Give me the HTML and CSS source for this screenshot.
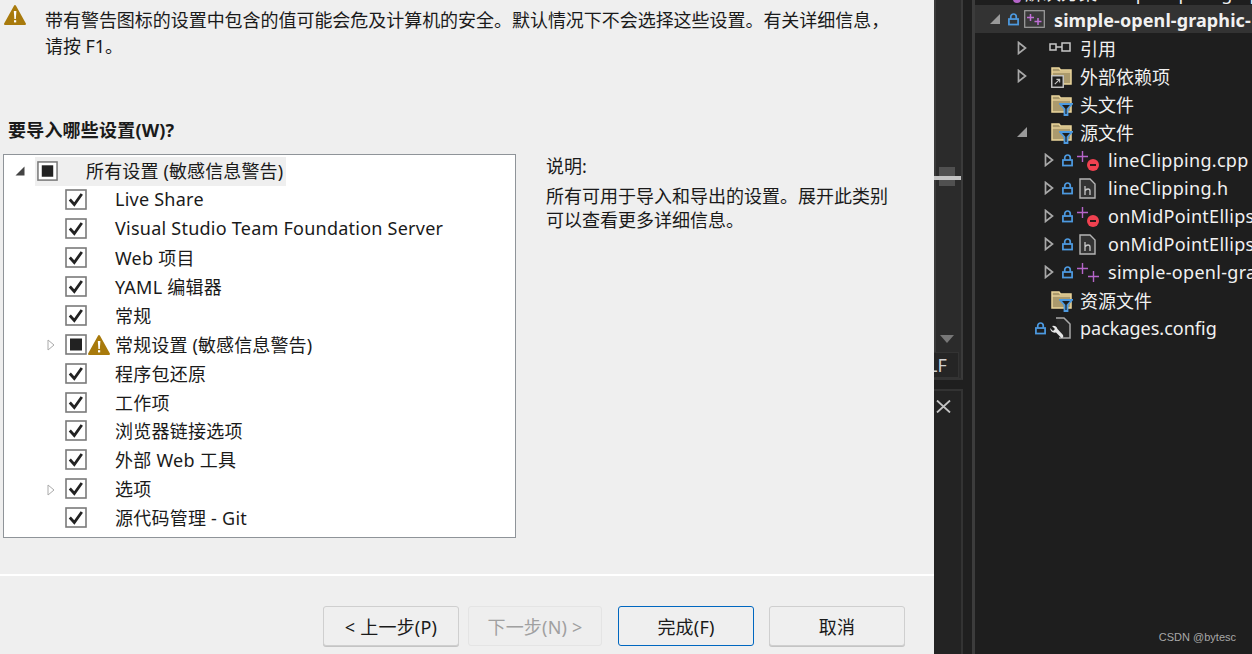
FILE: index.html
```html
<!DOCTYPE html>
<html lang="zh">
<head>
<meta charset="utf-8">
<title>导入设置</title>
<link rel="stylesheet" href="styles.css">
</head>
<body>
<svg class="defs" width="0" height="0">
  <defs>
    <symbol id="warn" viewBox="0 0 22 22"><path d="M11 2 L21 20 H1 Z" fill="#a87a0c" stroke="#a87a0c" stroke-width="2" stroke-linejoin="round"/><path d="M9.800 7 H12.400 L11.800 15 H10.400 Z" fill="#fff"/><rect x="10" y="16.200" width="2.200" height="2.200" fill="#fff"/></symbol>
    <symbol id="check" viewBox="0 0 22 22"><rect x="1" y="1" width="20" height="19" fill="#fff" stroke="#7a7a7a" stroke-width="1.600"/><path d="M4.800 10.500 L9.300 15.500 L16.800 5" fill="none" stroke="#222" stroke-width="2.800"/></symbol>
    <symbol id="mixed" viewBox="0 0 22 22"><rect x="1" y="1" width="20" height="19" fill="#fff" stroke="#7a7a7a" stroke-width="1.600"/><rect x="5" y="4.500" width="12" height="12" fill="#222"/></symbol>
    <symbol id="lock" viewBox="0 0 12 13"><path d="M3 6 V3.500 a3 3 0 0 1 6 0 V6" fill="none" stroke="#4d9ae0" stroke-width="1.900"/><rect x="1" y="6" width="10" height="6" fill="none" stroke="#4d9ae0" stroke-width="1.900"/></symbol>
    <symbol id="arrow" viewBox="0 0 10 14"><path d="M1.500 1.500 L8.500 7 L1.500 12.500 Z" fill="none" stroke="#a8a8a8" stroke-width="1.700"/></symbol>
    <symbol id="folder" viewBox="0 0 21 18"><path d="M1 1 H8 L9.500 3 H20 V17 H1 Z" fill="#ab9a6d" stroke="#ecd69c" stroke-width="1.500"/><path d="M1 5 H20" stroke="#ecd69c" stroke-width="1.300"/></symbol>
    <symbol id="filter" viewBox="0 0 14 13"><path d="M1 1 H13 L8.500 6 V12 H5.500 V6 Z" fill="#1e1e1e" stroke="#4d9ae0" stroke-width="1.800"/></symbol>
    <symbol id="hfile" viewBox="0 0 17 21"><path d="M1 1 H11 L16 6 V20 H1 Z" fill="#333" stroke="#b5b5b5" stroke-width="1.400"/><path d="M6 8 V17 M6 13 Q7 11 9 11 Q11 11 11 13 V17" fill="none" stroke="#c8c8c8" stroke-width="1.300"/></symbol>
    <symbol id="plus" viewBox="0 0 11 11"><path d="M5.500 0 V11 M0 5.500 H11" stroke="#b565c9" stroke-width="1.400"/></symbol>
  </defs>
</svg>
<div class="screen">
  <main class="dialog">
    <section class="notice">
      <svg class="notice-icon"><use href="#warn"/></svg>
      <p>带有警告图标的设置中包含的值可能会危及计算机的安全。默认情况下不会选择这些设置。有关详细信息，<br>请按 F1。</p>
    </section>
    <h1 class="prompt">要导入哪些设置(W)?</h1>
    <section class="chooser">
      <div class="tree">
        <div class="row root">
          <svg class="root-arrow" viewBox="0 0 10 10"><path d="M9.500 .5 V9.500 H.5 Z" fill="#444"/></svg>
          <div class="root-sel">
            <svg class="box"><use href="#mixed"/></svg>
            <span class="root-label">所有设置 (敏感信息警告)</span>
          </div>
        </div>
        <div class="row"><svg class="box"><use href="#check"/></svg><span class="label">Live Share</span></div>
        <div class="row"><svg class="box"><use href="#check"/></svg><span class="label">Visual Studio Team Foundation Server</span></div>
        <div class="row"><svg class="box"><use href="#check"/></svg><span class="label">Web 项目</span></div>
        <div class="row"><svg class="box"><use href="#check"/></svg><span class="label">YAML 编辑器</span></div>
        <div class="row"><svg class="box"><use href="#check"/></svg><span class="label">常规</span></div>
        <div class="row">
          <svg class="expander" viewBox="0 0 8 12"><path d="M1 1 L7 6 L1 11 Z" fill="#fff" stroke="#aaa"/></svg>
          <svg class="box"><use href="#mixed"/></svg>
          <svg class="row-warn"><use href="#warn"/></svg>
          <span class="label warned">常规设置 (敏感信息警告)</span>
        </div>
        <div class="row"><svg class="box"><use href="#check"/></svg><span class="label">程序包还原</span></div>
        <div class="row"><svg class="box"><use href="#check"/></svg><span class="label">工作项</span></div>
        <div class="row"><svg class="box"><use href="#check"/></svg><span class="label">浏览器链接选项</span></div>
        <div class="row"><svg class="box"><use href="#check"/></svg><span class="label">外部 Web 工具</span></div>
        <div class="row">
          <svg class="expander" viewBox="0 0 8 12"><path d="M1 1 L7 6 L1 11 Z" fill="#fff" stroke="#aaa"/></svg>
          <svg class="box"><use href="#check"/></svg><span class="label">选项</span>
        </div>
        <div class="row"><svg class="box"><use href="#check"/></svg><span class="label">源代码管理 - Git</span></div>
      </div>
      <div class="desc">
        <p class="desc-title">说明:</p>
        <p>所有可用于导入和导出的设置。展开此类别<br>可以查看更多详细信息。</p>
      </div>
    </section>
    <footer class="footer">
      <button class="btn">&lt; 上一步(P)</button>
      <button class="btn off">下一步(N) &gt;</button>
      <button class="btn primary">完成(F)</button>
      <button class="btn">取消</button>
    </footer>
  </main>
  <div class="strip">
    <div class="scrollbar">
      <div class="thumb"></div>
      <svg class="scroll-down" viewBox="0 0 14 8"><path d="M0 0 H14 L7 8 Z" fill="#777"/></svg>
      <div class="lf">LF</div>
    </div>
    <div class="close-pane">
      <svg class="close-x" viewBox="0 0 15 13"><path d="M1 .5 L14 12.500 M14 .5 L1 12.500" stroke="#c4c4c4" stroke-width="1.800"/></svg>
    </div>
  </div>
  <aside class="explorer">
    <div class="top-cut"><span class="cut-dot"></span><span class="cut-text">解决方案 'simple-openl-graphic'</span></div>
    <div class="node project">
      <svg class="tri" viewBox="0 0 10 10"><path d="M10 0 V10 H0 Z" fill="#9a9a9a"/></svg>
      <svg class="ic-lock"><use href="#lock"/></svg>
      <svg class="proj-ic" viewBox="0 0 21 18"><rect x=".7" y=".7" width="19.600" height="16.600" fill="#3a3a3a" stroke="#a0a0a0" stroke-width="1.200"/><path d="M6.500 4 V11 M3 7.500 H10 M14 8 V15 M10.500 11.500 H17.500" stroke="#c06fd6" stroke-width="1.500"/></svg>
      <span class="txt">simple-openl-graphic-</span>
    </div>
    <div class="node l2"><svg class="arr"><use href="#arrow"/></svg>
      <svg class="ic-main" viewBox="0 0 24 20"><rect x="1" y="6" width="6" height="6" fill="none" stroke="#c8c8c8" stroke-width="1.500"/><path d="M7 9 H13" stroke="#c8c8c8" stroke-width="1.500"/><rect x="13" y="5" width="8" height="8" fill="none" stroke="#c8c8c8" stroke-width="1.500"/></svg><span class="txt">引用</span></div>
    <div class="node l2"><svg class="arr"><use href="#arrow"/></svg>
      <span class="stack"><svg class="ic-folder"><use href="#folder"/></svg><svg class="ic-short" viewBox="0 0 12 12"><rect x=".7" y=".7" width="10.600" height="10.600" fill="#1e1e1e" stroke="#c8c8c8" stroke-width="1.300"/><path d="M3.500 8.500 L8 4 M5 4 H8 V7" fill="none" stroke="#c8c8c8"/></svg></span><span class="txt">外部依赖项</span></div>
    <div class="node l2 noarr">
      <span class="stack"><svg class="ic-folder"><use href="#folder"/></svg><svg class="ic-filter"><use href="#filter"/></svg></span><span class="txt">头文件</span></div>
    <div class="node l2"><svg class="tri2" viewBox="0 0 10 10"><path d="M10 0 V10 H0 Z" fill="#9a9a9a"/></svg>
      <span class="stack"><svg class="ic-folder"><use href="#folder"/></svg><svg class="ic-filter"><use href="#filter"/></svg></span><span class="txt">源文件</span></div>
    <div class="node l3"><svg class="arr"><use href="#arrow"/></svg><svg class="ic-lock"><use href="#lock"/></svg>
      <span class="stack file"><svg class="ic-plus"><use href="#plus"/></svg><span class="minus"></span></span><span class="txt file-name">lineClipping.cpp</span></div>
    <div class="node l3"><svg class="arr"><use href="#arrow"/></svg><svg class="ic-lock"><use href="#lock"/></svg>
      <span class="stack file"><svg class="ic-h"><use href="#hfile"/></svg></span><span class="txt file-name">lineClipping.h</span></div>
    <div class="node l3"><svg class="arr"><use href="#arrow"/></svg><svg class="ic-lock"><use href="#lock"/></svg>
      <span class="stack file"><svg class="ic-plus"><use href="#plus"/></svg><span class="minus"></span></span><span class="txt file-name">onMidPointEllipse.cpp</span></div>
    <div class="node l3"><svg class="arr"><use href="#arrow"/></svg><svg class="ic-lock"><use href="#lock"/></svg>
      <span class="stack file"><svg class="ic-h"><use href="#hfile"/></svg></span><span class="txt file-name">onMidPointEllipse.h</span></div>
    <div class="node l3"><svg class="arr"><use href="#arrow"/></svg><svg class="ic-lock"><use href="#lock"/></svg>
      <span class="stack file"><svg class="ic-plus"><use href="#plus"/></svg><svg class="ic-plus second"><use href="#plus"/></svg></span><span class="txt file-name">simple-openl-graphic.cpp</span></div>
    <div class="node l2 noarr">
      <span class="stack"><svg class="ic-folder"><use href="#folder"/></svg><svg class="ic-filter"><use href="#filter"/></svg></span><span class="txt">资源文件</span></div>
    <div class="node pkg"><svg class="ic-lock"><use href="#lock"/></svg>
      <svg class="ic-main" viewBox="0 0 22 22"><path d="M7 1 H15 L21 7 V21 H10" fill="#262626" stroke="#a8a8a8" stroke-width="1.500"/><path d="M1 11 L4 14 L6 12 L3 9 Q7 8 8.500 12 L14 18 Q15 20.500 12.500 21 L7 15.500 Q2 16.500 1 11 Z" fill="#e6e6e6"/></svg><span class="txt">packages.config</span></div>
    <div class="watermark">CSDN @bytesc</div>
  </aside>
</div>
</body>
</html>
```
FILE: styles.css
```css
* { box-sizing: border-box; }
html, body { margin: 0; padding: 0; }
body { width: 1252px; height: 654px; overflow: hidden; background: #1e1e1e; font-family: "Noto Sans", "Noto Sans CJK SC", sans-serif; }
p { margin: 0; }
.defs { display: block; height: 0; }
.screen { display: flex; width: 1252px; height: 654px; overflow: hidden; }

.dialog { flex: 0 0 934px; height: 654px; background: #efefef; color: #1a1a1a; font-size: 18px; display: flex; flex-direction: column; }
.notice { display: flex; height: 64px; padding: 4px 0 0 4px; }
.notice-icon { width: 22px; height: 22px; flex: none; }
.notice p { margin-left: 19px; font-size: 18px; line-height: 26px; white-space: nowrap; margin-top: 3px; letter-spacing: -.04px; }
.prompt { margin: 54px 0 0 8px; font-size: 18px; line-height: 24px; font-weight: 700; color: #1a1a1a; letter-spacing: .2px; }
.chooser { display: flex; margin: 12px 0 0 3px; }
.tree { width: 513px; height: 384px; background: #fff; border: 1px solid #8f9499; padding-top: 2px; display: flex; flex-direction: column; }
.row { position: relative; height: 28.9px; display: flex; align-items: center; padding-left: 61px; flex: none; white-space: nowrap; }
.box { width: 22px; height: 22px; flex: none; }
.label { position: relative; top: -1px; margin-left: 28px; font-size: 18px; letter-spacing: .24px; }
.label.warned { margin-left: 5px; letter-spacing: .14px; }
.row-warn { width: 22px; height: 22px; flex: none; margin-left: 1px; }
.expander { position: absolute; left: 43px; top: 8px; width: 8px; height: 14px; }
.root { padding-left: 11px; }
.root-arrow { width: 10px; height: 10px; flex: none; }
.root-sel { display: flex; align-items: center; height: 29px; margin-left: 10px; padding: 0 3px 0 2px; background: #efefef; }
.root-sel .box { width: 21px; height: 21px; }
.root-label { position: relative; top: -1px; margin-left: 28px; font-size: 18px; letter-spacing: .14px; }
.desc { margin: 0 0 0 30px; font-size: 18px; line-height: 24px; color: #1a1a1a; white-space: nowrap; }
.desc-title { margin-bottom: 6px; }

.footer { margin-top: 36px; padding: 30px 29px 0 323px; border-top: 2px solid #fff; display: flex; flex: 1; align-items: flex-start; font-size: 18px; }
.btn { height: 40px; width: 136px; margin-right: 9px; background: #efefef; border: 1px solid #cfcfcf; border-radius: 3px; font: 18px "Noto Sans", "Noto Sans CJK SC", sans-serif; letter-spacing: .2px; color: #1a1a1a; padding: 0; box-shadow: 0 1px 0 #c4c4c4; }
.btn:last-child { margin-right: 0; }
.btn.off { width: 134px; margin-right: 16px; color: #a0a0a0; background: #eeeeee; border-color: #e4e4e4; box-shadow: none; }
.btn.primary { border: 1px solid #0067c0; margin-right: 15px; box-shadow: none; }

.strip { flex: 0 0 41px; height: 654px; background: #1f1f1f; display: flex; flex-direction: column; border-right: 3px solid #3c3c3c; padding-right: 9px; color: #ccc; }
.scrollbar { position: relative; flex: 0 0 380px; background: #2b2b2b; border-left: 2px solid #3a3a3a; border-right: 2px solid #3a3a3a; border-bottom: 2px solid #333; }
.thumb { position: absolute; left: 3px; top: 167px; width: 16px; height: 19px; background: #505050; }
.thumb::after { content: ""; position: absolute; left: -5px; top: 9px; width: 27px; height: 4px; background: #c4c4c4; }
.scroll-down { position: absolute; left: 4px; top: 335px; width: 14px; height: 8px; }
.lf { position: absolute; left: -2px; top: 352px; height: 26px; width: 25px; background: #252525; border: 1px solid #333; border-left: 0; font-size: 18px; line-height: 24px; text-indent: -6px; overflow: hidden; color: #d0d0d0; }
.close-pane { margin-top: 9px; flex: 1; background: #232323; border: 2px solid #333; border-left: 0; border-bottom: 0; padding: 9px 0 0 2px; }
.close-x { display: block; width: 15px; height: 13px; }

.explorer { position: relative; flex: 1; min-width: 0; height: 654px; background: #1e1e1e; color: #f1f1f1; font-size: 18px; overflow: hidden; }
.top-cut { position: relative; height: 5px; overflow: hidden; }
.cut-dot { position: absolute; left: 38px; top: -5px; width: 8px; height: 8px; border-radius: 50%; background: #b565c9; }
.cut-text { position: absolute; left: 50px; bottom: 0; white-space: nowrap; }
.node { display: flex; align-items: center; height: 28px; white-space: nowrap; }
.project { height: 28px; margin-bottom: 1px; background: #333; font-weight: 700; padding-left: 15px; }
.project .txt { position: relative; top: 1px; letter-spacing: .1px; }
.file-name { letter-spacing: .3px; }
.tri { width: 10px; height: 10px; flex: none; }
.ic-lock { width: 11px; height: 13px; flex: none; }
.project .ic-lock { margin-left: 8px; }
.proj-ic { width: 21px; height: 18px; flex: none; margin: 0 9px 0 5px; }
.l2 { padding-left: 42px; }
.l2.noarr { padding-left: 74px; }
.l3 { padding-left: 69px; }
.arr { width: 10px; height: 14px; flex: none; margin-right: 8px; }
.l2 .arr { margin-right: 22px; }
.tri2 { width: 10px; height: 10px; flex: none; margin-right: 22px; }
.ic-main { width: 24px; height: 20px; flex: none; margin-right: 7px; }
.stack { position: relative; display: block; width: 24px; height: 22px; flex: none; margin-right: 7px; }
.ic-folder { position: absolute; left: 2px; top: 2px; width: 21px; height: 18px; }
.ic-filter { position: absolute; left: 10px; top: 10px; width: 14px; height: 13px; }
.ic-short { position: absolute; left: 2px; top: 10px; width: 13px; height: 13px; }
.stack.file { width: 22px; margin: 0 9px 0 4px; }
.ic-plus { position: absolute; left: 0; top: 2px; width: 11px; height: 11px; }
.ic-plus.second { left: 11px; top: 10px; }
.minus { position: absolute; left: 10px; top: 10px; width: 12px; height: 12px; border-radius: 50%; background: #f04150; }
.minus::after { content: ""; position: absolute; left: 3px; top: 5px; width: 6px; height: 2px; background: #2a1a1a; }
.ic-h { position: absolute; left: 2px; top: 1px; width: 17px; height: 21px; }
.pkg { padding-left: 60px; }
.pkg .ic-lock { margin-right: 3px; }
.pkg .ic-main { height: 22px; margin-right: 9px; width: 22px; }
.watermark { position: absolute; right: 16px; top: 631px; font: 11px "Liberation Sans", sans-serif; color: #a8a8a8; }
```
